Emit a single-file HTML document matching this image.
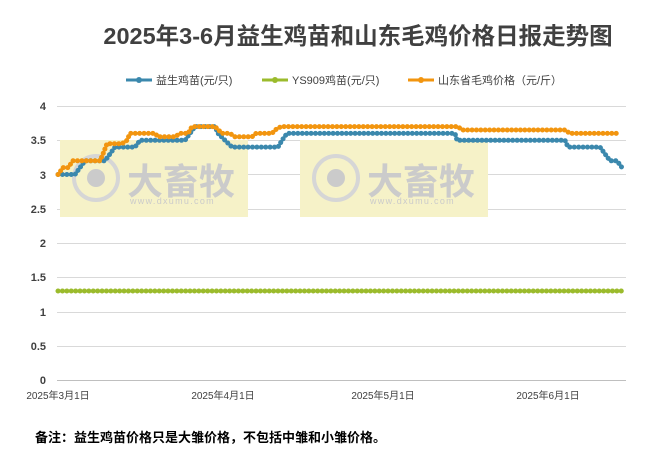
<!DOCTYPE html>
<html><head><meta charset="utf-8"><style>
body{margin:0;background:#fff;width:663px;height:462px;overflow:hidden;font-family:"Liberation Sans","Noto Sans CJK SC",sans-serif}
</style></head><body>
<svg width="663" height="462" xmlns="http://www.w3.org/2000/svg" font-family="Liberation Sans, Noto Sans CJK SC, sans-serif">
<rect width="663" height="462" fill="#fff"/>
<text x="358" y="44" text-anchor="middle" font-size="23.5" font-weight="bold" fill="#404040">2025年3-6月益生鸡苗和山东毛鸡价格日报走势图</text>
<g font-size="11" fill="#404040">
<line x1="126" y1="80" x2="152" y2="80" stroke="#3b88ad" stroke-width="3"/><circle cx="139" cy="80" r="3" fill="#3b88ad"/>
<text x="156" y="84">益生鸡苗(元/只)</text>
<line x1="262" y1="80" x2="288" y2="80" stroke="#9bbb2c" stroke-width="3"/><circle cx="275" cy="80" r="3" fill="#9bbb2c"/>
<text x="292" y="84">YS909鸡苗(元/只)</text>
<line x1="408" y1="80" x2="434" y2="80" stroke="#f2950f" stroke-width="3"/><circle cx="421" cy="80" r="3" fill="#f2950f"/>
<text x="438" y="84">山东省毛鸡价格（元/斤）</text>
</g>
<g stroke="#d9d9d9" stroke-width="1">
<line x1="57" y1="106.5" x2="626" y2="106.5"/><line x1="57" y1="140.5" x2="626" y2="140.5"/>
<line x1="57" y1="174.5" x2="626" y2="174.5"/><line x1="57" y1="209.5" x2="626" y2="209.5"/>
<line x1="57" y1="243.5" x2="626" y2="243.5"/><line x1="57" y1="277.5" x2="626" y2="277.5"/>
<line x1="57" y1="312.5" x2="626" y2="312.5"/><line x1="57" y1="346.5" x2="626" y2="346.5"/>
<line x1="57" y1="380.5" x2="626" y2="380.5" stroke="#bfbfbf"/>
</g>
<g font-size="11" fill="#404040" text-anchor="end" font-weight="bold">
<text x="46" y="110">4</text><text x="46" y="144">3.5</text><text x="46" y="179">3</text><text x="46" y="213">2.5</text>
<text x="46" y="247">2</text><text x="46" y="281">1.5</text><text x="46" y="316">1</text><text x="46" y="350">0.5</text><text x="46" y="384">0</text>
</g>
<g font-size="10" fill="#404040" text-anchor="middle">
<text x="58" y="399">2025年3月1日</text><text x="223" y="399">2025年4月1日</text><text x="383" y="399">2025年5月1日</text><text x="548" y="399">2025年6月1日</text>
</g>
<g>
<rect x="60" y="140" width="188" height="77" fill="#f6f2c8"/>
<rect x="300" y="140" width="188" height="77" fill="#f6f2c8"/>
<g fill="none" stroke="#d6d6d6" stroke-width="4"><circle cx="96" cy="178" r="22"/><circle cx="336" cy="178" r="22"/></g>
<g fill="#cbcbcb"><circle cx="96" cy="178" r="9"/><circle cx="336" cy="178" r="9"/></g>
<g font-size="36" font-weight="bold" fill="#cbcbcb"><text x="127" y="194">大畜牧</text><text x="367" y="194">大畜牧</text></g>
<g font-size="9" fill="#cbcbcb"><text x="130" y="204" letter-spacing="1.3">www.dxumu.com</text><text x="370" y="204" letter-spacing="1.3">www.dxumu.com</text></g>
</g>
<g fill="none" stroke-width="5" stroke-linecap="round" stroke-linejoin="round" stroke-dasharray="0.1 4.3">
<polyline stroke="#9bbb2c" points="58,291 622,291"/>
<polyline stroke="#3b88ad" points="58,174.5 75,174.5 80,167.6 85,160.8 105,160.8 110,153.9 115,147.1 135,147.1 140,140.3 185,140.3 190,133.4 195,126.6 215,126.6 218,133.4 225,140.3 232,147.1 278,147.1 282,140.3 287,133.4 455,133.4 457,140.3 565,140.3 568,147.1 600,147.1 605,153.9 610,160.8 617,160.8 622,167.6"/>
<polyline stroke="#f2950f" points="58,174.5 63,167.6 68,167.6 73,160.8 100,160.8 103,153.9 107,143.7 122,143.7 127,140.3 130,133.4 155,133.4 158,136.8 175,136.8 180,133.4 188,133.4 192,126.6 215,126.6 222,133.4 230,133.4 235,136.8 252,136.8 256,133.4 272,133.4 275,130 281,126.6 458,126.6 462,130 565,130 570,133.4 618,133.4"/>
</g>
<text x="35" y="442" font-size="13" font-weight="bold" fill="#000">备注：益生鸡苗价格只是大雏价格，不包括中雏和小雏价格。</text>
</svg>
</body></html>
